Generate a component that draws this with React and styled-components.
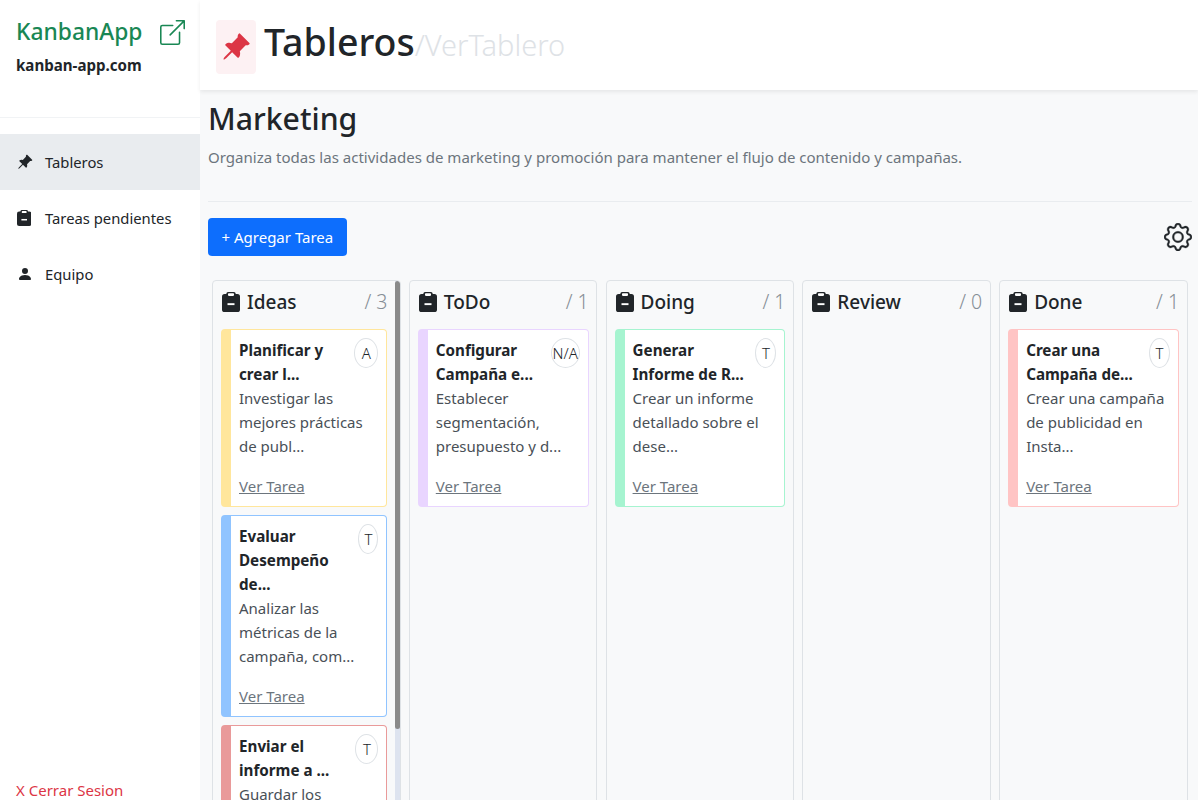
import React from 'react';
import styled, { createGlobalStyle } from 'styled-components';
import {
  BsBoxArrowUpRight,
  BsGear,
  BsPersonFill,
  BsPinAngleFill,
} from 'react-icons/bs';

const GlobalStyle = createGlobalStyle`
  * { box-sizing: border-box; }
  html, body { margin: 0; height: 100%; overflow: hidden; }
  body {
    font-family: "Noto Sans", "Open Sans", sans-serif;
    font-size: 15px;
    line-height: 24px;
    color: #212529;
    background: #f8f9fa;
  }
`;

const Layout = styled.div`
  display: flex;
  height: 800px;
  overflow: hidden;
`;

const Sidebar = styled.aside`
  width: 200px;
  flex: none;
  display: flex;
  flex-direction: column;
  background: #fff;
`;

const Brand = styled.div`
  height: 118px;
  padding: 14px 15px 0 16px;
  border-bottom: 1px solid #f1f3f5;
`;

const BrandRow = styled.div`
  display: flex;
  align-items: center;
  justify-content: space-between;
  height: 36px;
  color: #198754;
  font-size: 22.8px;
  font-weight: 500;
  svg { font-size: 25px; }
`;

const BrandHost = styled.div`
  margin-top: 3px;
  font-size: 15.1px;
  font-weight: 700;
`;

const NavList = styled.nav`
  margin-top: 16px;
  flex: 1;
`;

const NavItem = styled.div`
  display: flex;
  align-items: center;
  height: 56px;
  padding-left: 17px;
  font-size: 14.8px;
  background: ${(p) => (p.$active ? '#e9ecef' : 'transparent')};
  svg { font-size: 16px; flex: none; }
`;

const NavIcon = styled.span`
  display: flex;
  width: 28px;
  flex: none;
`;

const Logout = styled.div`
  padding: 0 16px;
  height: 20px;
  line-height: 20px;
  color: #dc3545;
  font-size: 15px;
`;

const Main = styled.main`
  flex: 1;
  min-width: 0;
  display: flex;
  flex-direction: column;
`;

const Header = styled.header`
  height: 90px;
  flex: none;
  display: flex;
  align-items: flex-start;
  padding: 20px 16px 0;
  background: #fff;
  box-shadow: 0 2px 4px rgba(0, 0, 0, 0.075);
`;

const PinBox = styled.div`
  width: 40px;
  height: 54px;
  display: flex;
  align-items: center;
  justify-content: center;
  margin-right: 8px;
  border-radius: 4px;
  background: #fdf1f3;
  color: #dc3545;
  font-size: 30px;
`;

const HeaderTitle = styled.h1`
  margin: -2px 0 0;
  font-size: 37.5px;
  font-weight: 500;
  line-height: 48px;
`;

const HeaderTrail = styled.span`
  margin-top: 1px;
  font-size: 29px;
  line-height: 48px;
  font-weight: 300;
  color: #dee2e6;
`;

const Content = styled.div`
  padding: 11px 6px 0 8px;
`;

const BoardTitle = styled.h2`
  margin: 0;
  font-size: 30.2px;
  font-weight: 500;
  line-height: 36px;
`;

const BoardText = styled.p`
  margin: 8px 0 0;
  color: #6c757d;
  font-size: 15.04px;
  line-height: 24px;
`;

const Divider = styled.hr`
  margin: 32px 0 16px;
  border: 0;
  border-top: 1px solid #e9ecef;
`;

const Toolbar = styled.div`
  display: flex;
  align-items: center;
  justify-content: space-between;
  svg { font-size: 28px; stroke: currentColor; stroke-width: 0.2px; }
`;

const AddButton = styled.button`
  height: 38px;
  padding: 0 13.5px;
  border: 0;
  border-radius: 4px;
  background: #0d6efd;
  color: #fff;
  font: inherit;
  font-size: 15px;
`;

const Board = styled.div`
  display: grid;
  grid-template-columns: repeat(5, 188.4px);
  gap: 8.4px;
  margin: 24px 0 0 4px;
`;

const Column = styled.section`
  position: relative;
  height: 531px;
  margin-right: ${(p) => (p.$scroll ? '-1px' : '0')};
  padding: 8px ${(p) => (p.$scroll ? '13px' : '7.5px')} 8px 8px;
  border: 1px solid #dee2e6;
  border-radius: 4px;
  overflow: hidden;
`;

const ScrollTrack = styled.div`
  position: absolute;
  top: 0;
  right: 0;
  bottom: 0;
  width: 5.5px;
  background: #dde3ef;
`;

const ScrollThumb = styled.div`
  height: 448px;
  border-radius: 3px;
  background: #8a8a8a;
`;

const ColumnHeader = styled.div`
  display: flex;
  align-items: center;
  height: 24px;
  margin: 1px 0 15px;
  font-size: 19px;
  font-weight: 500;
`;

const ClipSvg = styled.svg`
  flex: none;
  width: ${(p) => p.$size * 0.9}px;
  height: ${(p) => p.$size}px;
  margin: 0 ${(p) => p.$gap}px 0 ${(p) => (p.$gap ? 1 : 0)}px;
`;

const ColumnCount = styled.span`
  margin-left: auto;
  color: #868e96;
  font-size: 19.5px;
  font-weight: 300;
`;

const Card = styled.article`
  display: flex;
  align-items: flex-start;
  flex-wrap: wrap;
  margin-bottom: 8px;
  padding: 8px;
  border: 1px solid ${(p) => p.$color};
  border-left-width: 10px;
  border-radius: 4px;
  background: #fff;
  font-size: 15px;
  &:last-child { margin-bottom: 0; }
`;

const CardTop = styled.div`
  display: flex;
  align-items: flex-start;
  justify-content: space-between;
  width: 100%;
`;

const CardTitle = styled.div`
  font-size: 15.2px;
  font-weight: 700;
  white-space: pre-line;
`;

const Badge = styled.span`
  flex: none;
  display: flex;
  align-items: center;
  justify-content: center;
  width: ${(p) => p.$width}px;
  height: 30px;
  border: 1px solid #dee2e6;
  border-radius: 50%;
  font-size: 15px;
  font-weight: 300;
  white-space: nowrap;
`;

const CardText = styled.div`
  width: 100%;
  margin-bottom: 16px;
  color: #495057;
  white-space: pre-line;
`;

const CardLink = styled.a`
  color: #6c757d;
  text-decoration: underline;
`;

const ClipIcon = ({ size, gap }) => (
  <ClipSvg $size={size} $gap={gap} viewBox="0 0 18 20" aria-hidden="true">
    <rect x="0" y="2" width="18" height="18" rx="2.6" fill="#212529" />
    <rect x="4.4" y="0" width="9.2" height="5.6" rx="1.6" fill="#212529" />
    <rect x="6" y="1.3" width="6" height="2.6" rx="0.8" fill="#fff" />
    <rect x="5.5" y="11.2" width="7" height="1.9" fill="#fff" />
  </ClipSvg>
);

const columns = [
  {
    name: 'Ideas',
    count: 3,
    cards: [
      { color: '#ffe69c', badge: 'A', width: 24, title: 'Planificar y\ncrear l...', text: 'Investigar las\nmejores prácticas\nde publ...' },
      { color: '#90c4ff', badge: 'T', width: 20, title: 'Evaluar\nDesempeño\nde...', text: 'Analizar las\nmétricas de la\ncampaña, com...' },
      { color: '#e99a9a', badge: 'T', width: 23, title: 'Enviar el\ninforme a ...', text: 'Guardar los\nresultados de la\ncampaña...' },
    ],
  },
  {
    name: 'ToDo',
    count: 1,
    cards: [
      { color: '#e9d5ff', badge: 'N/A', width: 29, title: 'Configurar\nCampaña e...', text: 'Establecer\nsegmentación,\npresupuesto y d...' },
    ],
  },
  {
    name: 'Doing',
    count: 1,
    cards: [
      { color: '#a6f4d0', badge: 'T', width: 21, title: 'Generar\nInforme de R...', text: 'Crear un informe\ndetallado sobre el\ndese...' },
    ],
  },
  { name: 'Review', count: 0, cards: [] },
  {
    name: 'Done',
    count: 1,
    cards: [
      { color: '#ffc4c4', badge: 'T', width: 21, title: 'Crear una\nCampaña de...', text: 'Crear una campaña\nde publicidad en\nInsta...' },
    ],
  },
];

const App = () => (
  <Layout>
    <GlobalStyle />
    <Sidebar>
      <Brand>
        <BrandRow>
          <span>KanbanApp</span>
          <BsBoxArrowUpRight />
        </BrandRow>
        <BrandHost>kanban-app.com</BrandHost>
      </Brand>
      <NavList>
        <NavItem $active><NavIcon><BsPinAngleFill /></NavIcon>Tableros</NavItem>
        <NavItem><NavIcon><ClipIcon size={16} gap={0} /></NavIcon>Tareas pendientes</NavItem>
        <NavItem><NavIcon><BsPersonFill /></NavIcon>Equipo</NavItem>
      </NavList>
      <Logout>X Cerrar Sesion</Logout>
    </Sidebar>
    <Main>
      <Header>
        <PinBox><BsPinAngleFill /></PinBox>
        <HeaderTitle>Tableros</HeaderTitle>
        <HeaderTrail>/VerTablero</HeaderTrail>
      </Header>
      <Content>
        <BoardTitle>Marketing</BoardTitle>
        <BoardText>Organiza todas las actividades de marketing y promoción para mantener el flujo de contenido y campañas.</BoardText>
        <Divider />
        <Toolbar>
          <AddButton>+ Agregar Tarea</AddButton>
          <BsGear />
        </Toolbar>
        <Board>
          {columns.map((col) => (
            <Column key={col.name} $scroll={col.cards.length > 1}>
              <ColumnHeader>
                <ClipIcon size={20} gap={7} />
                <span>{col.name}</span>
                <ColumnCount>/ {col.count}</ColumnCount>
              </ColumnHeader>
              {col.cards.map((card) => (
                <Card key={card.title} $color={card.color}>
                  <CardTop>
                    <CardTitle>{card.title}</CardTitle>
                    <Badge $width={card.width}>{card.badge}</Badge>
                  </CardTop>
                  <CardText>{card.text}</CardText>
                  <CardLink>Ver Tarea</CardLink>
                </Card>
              ))}
              {col.cards.length > 1 && (
                <ScrollTrack><ScrollThumb /></ScrollTrack>
              )}
            </Column>
          ))}
        </Board>
      </Content>
    </Main>
  </Layout>
);

export default App;
